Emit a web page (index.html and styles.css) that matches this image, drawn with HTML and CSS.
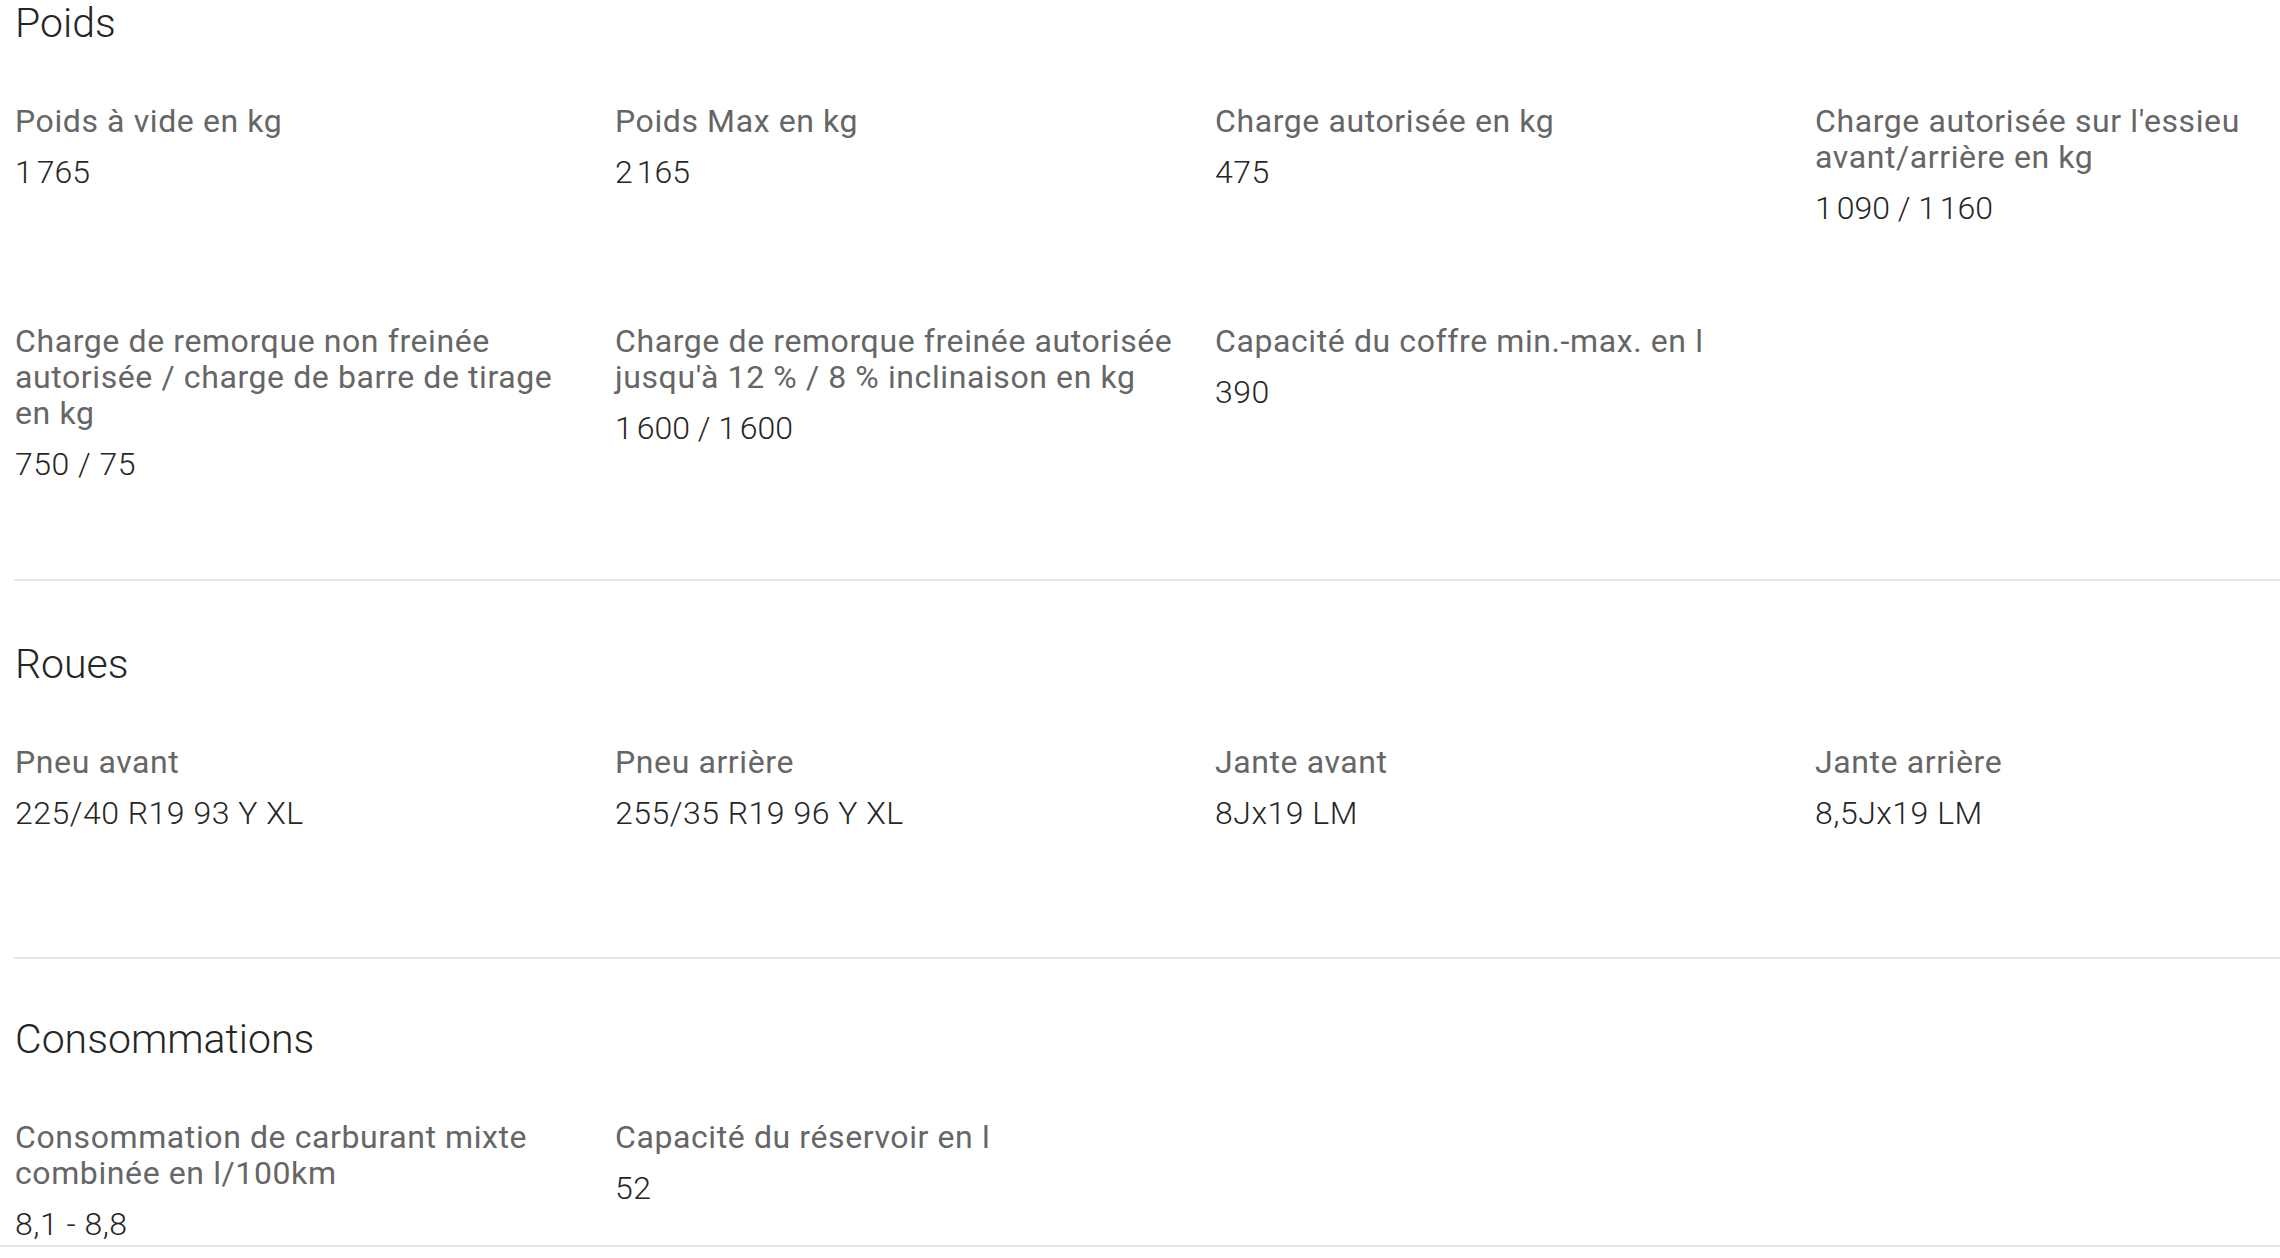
FILE: index.html
```html
<!DOCTYPE html>
<html lang="fr">
<head>
    <meta charset="UTF-8">
    <meta name="viewport" content="width=device-width, initial-scale=1.0">
    <title>Caractéristiques techniques</title>
    <link rel="stylesheet" href="styles.css">
</head>
<body>
    <div class="specs">

        <!-- Poids -->
        <section class="spec-section">
            <h2 class="spec-title">Poids</h2>
            <div class="spec-grid">
                <div class="spec-item">
                    <div class="spec-label">Poids à vide en kg</div>
                    <div class="spec-value">1&#8239;765</div>
                </div>
                <div class="spec-item">
                    <div class="spec-label">Poids Max en kg</div>
                    <div class="spec-value">2&#8239;165</div>
                </div>
                <div class="spec-item">
                    <div class="spec-label">Charge autorisée en kg</div>
                    <div class="spec-value">475</div>
                </div>
                <div class="spec-item">
                    <div class="spec-label">Charge autorisée sur l'essieu avant/arrière en kg</div>
                    <div class="spec-value">1&#8239;090 / 1&#8239;160</div>
                </div>
                <div class="spec-item">
                    <div class="spec-label">Charge de remorque non freinée autorisée / charge de barre de tirage en kg</div>
                    <div class="spec-value">750 / 75</div>
                </div>
                <div class="spec-item">
                    <div class="spec-label">Charge de remorque freinée autorisée jusqu'à 12 % / 8 % inclinaison en kg</div>
                    <div class="spec-value">1&#8239;600 / 1&#8239;600</div>
                </div>
                <div class="spec-item">
                    <div class="spec-label">Capacité du coffre min.-max. en l</div>
                    <div class="spec-value">390</div>
                </div>
            </div>
        </section>

        <!-- Roues -->
        <section class="spec-section">
            <h2 class="spec-title">Roues</h2>
            <div class="spec-grid">
                <div class="spec-item">
                    <div class="spec-label">Pneu avant</div>
                    <div class="spec-value">225/40 R19 93 Y XL</div>
                </div>
                <div class="spec-item">
                    <div class="spec-label">Pneu arrière</div>
                    <div class="spec-value">255/35 R19 96 Y XL</div>
                </div>
                <div class="spec-item">
                    <div class="spec-label">Jante avant</div>
                    <div class="spec-value">8Jx19 LM</div>
                </div>
                <div class="spec-item">
                    <div class="spec-label">Jante arrière</div>
                    <div class="spec-value">8,5Jx19 LM</div>
                </div>
            </div>
        </section>

        <!-- Consommations -->
        <section class="spec-section">
            <h2 class="spec-title">Consommations</h2>
            <div class="spec-grid">
                <div class="spec-item">
                    <div class="spec-label">Consommation de carburant mixte combinée en l/100km</div>
                    <div class="spec-value">8,1 - 8,8</div>
                </div>
                <div class="spec-item">
                    <div class="spec-label">Capacité du réservoir en l</div>
                    <div class="spec-value">52</div>
                </div>
            </div>
        </section>

    </div>

    <div class="page-end"></div>
</body>
</html>
```

FILE: styles.css
```css
body {
    margin: 0;
    font-family: Roboto, "Liberation Sans", Arial, sans-serif;
    color: #262626;
    background-color: #fff;
    overflow: hidden;
}

.specs {
    margin-left: 14px;
}

.spec-section {
    padding-top: 60px;
    border-bottom: 2px solid #e6e6e6;
}

.spec-section:first-child {
    padding-top: 0;
}

.spec-section:last-child {
    padding-top: 57px;
}

.spec-title {
    margin: 0;
    padding-left: 1px;
    font-size: 41px;
    line-height: 46px;
    font-weight: 300;
    color: #262626;
}

.spec-grid {
    display: grid;
    grid-template-columns: repeat(4, 600px);
    margin-top: 57px;
}

.spec-item {
    min-height: 120px;
    padding: 0 20px 93px 1px;
}

.spec-label {
    font-size: 32px;
    line-height: 36px;
    letter-spacing: 0.6px;
    color: #666;
}

.spec-value {
    margin-top: 11px;
    font-size: 32px;
    line-height: 44px;
    font-weight: 300;
    letter-spacing: 0.5px;
    color: #262626;
}

.page-end {
    position: fixed;
    left: 0;
    right: 0;
    bottom: 0;
    height: 11px;
    border-top: 2px solid #e6e6e6;
    background-color: #fff;
}
```
